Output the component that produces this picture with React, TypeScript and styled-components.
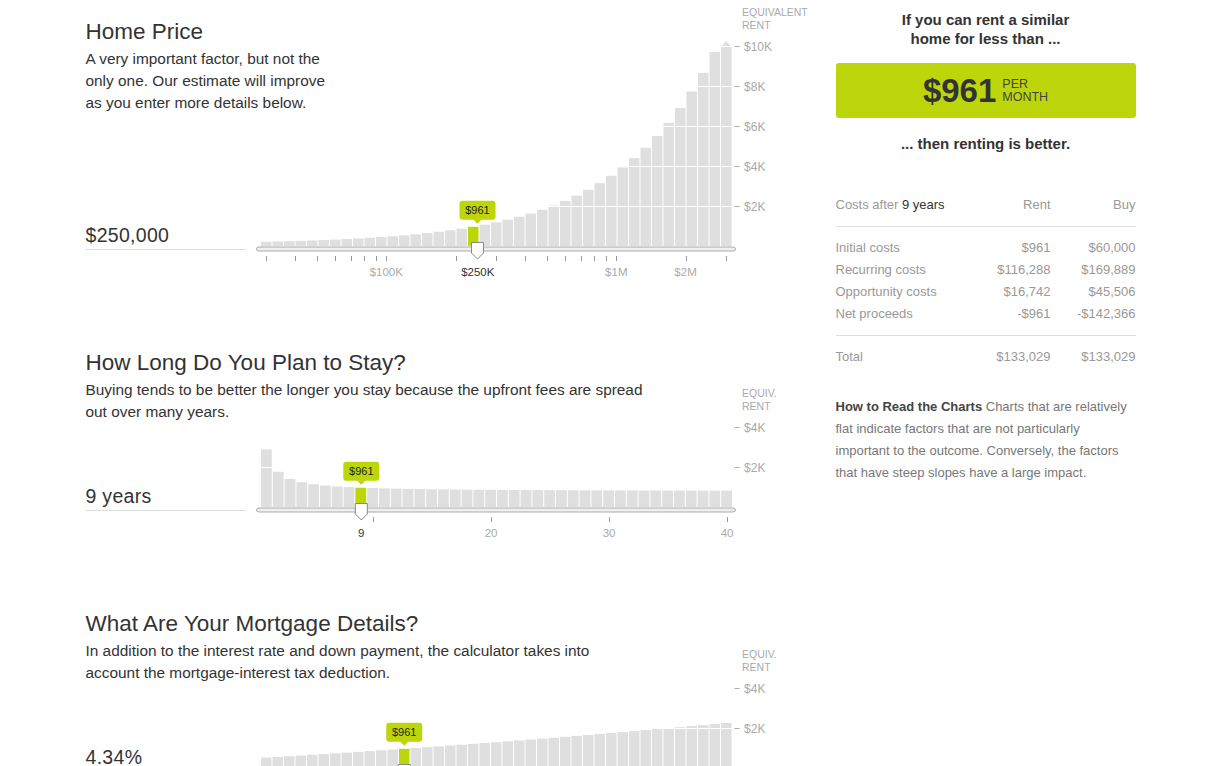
import React from "react";
import styled, { createGlobalStyle } from "styled-components";

const GREEN = "#bdd60b";
const FONT = `"Liberation Sans", Arial, sans-serif`;

const Global = createGlobalStyle`
  html, body { margin: 0; padding: 0; background: #fff; }
  body { font-family: ${FONT}; color: #333; }
  * { box-sizing: border-box; }
`;

const Page = styled.div`
  width: 1051px;
  margin: 0 auto;
  padding-left: 1px;
  display: flex;
  align-items: flex-start;
`;

const Main = styled.main`
  width: 750px;
  flex: none;
`;

const Sidebar = styled.aside`
  width: 300px;
  flex: none;
  padding-top: 10px;
`;

/* ---------- sections ---------- */

const Section = styled.section`
  display: grid;
  grid-template-columns: 170px 560px;
  margin-bottom: 49px;
`;

const Intro = styled.div<{ $w: number }>`
  grid-row: 1;
  grid-column: 1 / 3;
  align-self: start;
  max-width: ${(p) => p.$w}px;
  padding-top: 18px;
  z-index: 1;
`;

const Heading = styled.h2`
  margin: 0;
  font-size: 22.5px;
  line-height: 28px;
  font-weight: 400;
  color: #333;
`;

const Desc = styled.p`
  margin: 2px 0 0;
  font-size: 15.4px;
  line-height: 22px;
  color: #333;
`;

const ChartWrap = styled.div<{ $top: number }>`
  grid-row: 1;
  grid-column: 2;
  margin-top: ${(p) => p.$top}px;
`;

const Value = styled.div`
  grid-row: 1;
  grid-column: 1;
  align-self: end;
  width: 160px;
  margin-bottom: 32px;
  padding-bottom: 3px;
  border-bottom: 1px solid #ddd;
  font-size: 19.5px;
  line-height: 22px;
  letter-spacing: 0.3px;
  color: #333;
`;

/* ---------- chart ---------- */

const ChartSvg = styled.svg`
  display: block;
  overflow: visible;
  font-family: ${FONT};
`;

type Tick = { x: number; label?: string; dark?: boolean; line?: boolean };

type ChartProps = {
  title: [string, string];
  maxK: number;
  bars: number[];
  step: number;
  selected: number;
  handleX: number;
  ticks: Tick[];
};

function BarChart({ title, maxK, bars, step, selected, handleX, ticks }: ChartProps) {
  const base = 46 + maxK * 20;
  const height = base + 36;
  const y = (k: number) => base - 20 * k;
  const levels: number[] = [];
  for (let k = 2; k <= maxK; k += 2) levels.push(k);
  const selTop = y(Math.min(bars[selected], maxK));
  const hx = handleX;
  return (
    <ChartSvg width={560} height={height} viewBox={`0 0 560 ${height}`}>
      <text x={486} y={16} fontSize={10.5} fill="#aaa">
        {title[0]}
      </text>
      <text x={486} y={29} fontSize={10.5} fill="#aaa">
        {title[1]}
      </text>

      {bars.map((v, i) => {
        const top = y(Math.min(v, maxK));
        const x = 5 + step * i;
        const cx = x + (step - 1) / 2;
        return (
          <g key={i}>
            <rect
              x={x}
              y={top}
              width={step - 1}
              height={base - top}
              fill={i === selected ? GREEN : "#dfdfdf"}
            />
            {v > maxK && (
              <polygon
                points={`${cx - 4.5},${top} ${cx + 4.5},${top} ${cx},${top - 5}`}
                fill="#dfdfdf"
              />
            )}
          </g>
        );
      })}

      {levels.map((k) => (
        <g key={k}>
          <line x1={0} x2={478} y1={y(k) + 0.5} y2={y(k) + 0.5} stroke="#fff" />
          <line x1={478.5} x2={483.5} y1={y(k) + 0.5} y2={y(k) + 0.5} stroke="#aaa" />
          <text x={488} y={y(k) + 4.5} fontSize={12} fill="#aaa">
            ${k}K
          </text>
        </g>
      ))}

      <rect
        x={0.5}
        y={base + 1}
        width={479}
        height={4}
        rx={2.5}
        fill="#efefef"
        stroke="#aaa"
      />

      {ticks.map((t, i) => (
        <g key={i}>
          {t.line !== false && (
            <line
              x1={Math.round(t.x) + 0.5}
              x2={Math.round(t.x) + 0.5}
              y1={base + 10}
              y2={base + 15}
              stroke="#999"
            />
          )}
          {t.label && (
            <text
              x={t.x}
              y={base + 30}
              fontSize={11.5}
              textAnchor="middle"
              fill={t.dark ? "#333" : "#aaa"}
            >
              {t.label}
            </text>
          )}
        </g>
      ))}

      <rect x={hx - 18} y={selTop - 26} width={36} height={19} rx={3} fill={GREEN} />
      <polygon
        points={`${hx - 4.5},${selTop - 7.5} ${hx + 4.5},${selTop - 7.5} ${hx},${selTop - 3}`}
        fill={GREEN}
      />
      <text x={hx} y={selTop - 12.5} fontSize={11} textAnchor="middle" fill="#222">
        $961
      </text>

      <path
        d={`M${hx - 6},${base - 3.5} H${hx + 6} V${base + 7} L${hx},${base + 13} L${hx - 6},${base + 7} Z`}
        fill="#fff"
        stroke="#888"
      />
    </ChartSvg>
  );
}

/* ---------- data ---------- */

const priceX = (p: number) => 386.3 + 230 * Math.log10(p / 1e5) - 256;

const priceBars = Array.from({ length: 41 }, (_, i) =>
  i === 18 ? 0.961 : 0.106 + 0.855 * Math.pow(10, 0.05 * (i - 18))
);

const priceTicks: Tick[] = [
  30e3, 40e3, 50e3, 60e3, 70e3, 80e3, 90e3, 1e5, 2e5, 3e5, 4e5, 5e5, 6e5, 7e5, 8e5, 9e5, 1e6, 2e6, 3e6,
].map((p) => ({
  x: priceX(p),
  label: p === 1e5 ? "$100K" : p === 1e6 ? "$1M" : p === 2e6 ? "$2M" : undefined,
}));
priceTicks.push({ x: priceX(2.5e5), label: "$250K", dark: true, line: false });

const yearX = (yr: number) => 5 + 11.8 * (yr - 1) + 5.9;
const yearBars = Array.from({ length: 40 }, (_, i) =>
  i === 8 ? 0.961 : 0.78 + 2.1 / Math.pow(i + 1, 1.1)
);
const yearTicks: Tick[] = [
  { x: yearX(9), label: "9", dark: true, line: false },
  { x: yearX(10) },
  { x: yearX(20), label: "20" },
  { x: yearX(30), label: "30" },
  { x: yearX(40), label: "40" },
];

const rateBars = Array.from({ length: 41 }, (_, i) =>
  i === 12 ? 0.961 : 0.52 + 0.03396 * i + 0.000232 * i * i
);
const rateX = (i: number) => 5 + 11.5 * i + 5.25;
const rateTicks: Tick[] = [0, 10, 20, 30, 40].map((i) => ({ x: rateX(i) }));

/* ---------- sidebar ---------- */

const Lead = styled.div`
  font-size: 15px;
  line-height: 19px;
  font-weight: 700;
  color: #333;
  text-align: center;
`;

const RentBox = styled.div`
  margin: 15px 0 16px;
  height: 55px;
  background: ${GREEN};
  border-radius: 3px;
  display: flex;
  align-items: center;
  justify-content: center;
  gap: 6px;
`;

const BigNum = styled.span`
  font-size: 33px;
  line-height: 36px;
  font-weight: 700;
  color: #333;
`;

const PerMonth = styled.span`
  display: flex;
  flex-direction: column;
  font-size: 12.5px;
  line-height: 13px;
  text-transform: uppercase;
  color: #444;
  margin-top: 1px;
`;

const CostTable = styled.div`
  margin-top: 41px;
  font-size: 13px;
  color: #999;
`;

const Row = styled.div`
  display: grid;
  grid-template-columns: 1fr 100px 85px;
  line-height: 22px;
`;

const HeadRow = styled(Row)`
  margin-bottom: 10px;
`;

const Group = styled.div`
  border-top: 1px solid #ddd;
  padding: 10px 0;
`;

const Cell = styled.span<{ $num?: boolean }>`
  text-align: ${(p) => (p.$num ? "right" : "left")};
`;

const Em = styled.span`
  color: #333;
`;

const HowTo = styled.p`
  margin: 18px 0 0;
  font-size: 13px;
  line-height: 22px;
  color: #777;
  strong {
    color: #444;
    font-weight: 700;
  }
`;

const rows: [string, string, string][] = [
  ["Initial costs", "$961", "$60,000"],
  ["Recurring costs", "$116,288", "$169,889"],
  ["Opportunity costs", "$16,742", "$45,506"],
  ["Net proceeds", "-$961", "-$142,366"],
];

export default function App() {
  return (
    <>
      <Global />
      <Page>
        <Main>
          <Section>
            <Intro $w={250}>
              <Heading>Home Price</Heading>
              <Desc>
                A very important factor, but not the only one. Our estimate will improve as you enter
                more details below.
              </Desc>
            </Intro>
            <ChartWrap $top={0}>
              <BarChart
                title={["EQUIVALENT", "RENT"]}
                maxK={10}
                bars={priceBars}
                step={11.5}
                selected={18}
                handleX={221.5}
                ticks={priceTicks}
              />
            </ChartWrap>
            <Value>$250,000</Value>
          </Section>

          <Section>
            <Intro $w={562}>
              <Heading>How Long Do You Plan to Stay?</Heading>
              <Desc>
                Buying tends to be better the longer you stay because the upfront fees are spread out
                over many years.
              </Desc>
            </Intro>
            <ChartWrap $top={50}>
              <BarChart
                title={["EQUIV.", "RENT"]}
                maxK={4}
                bars={yearBars}
                step={11.8}
                selected={8}
                handleX={yearX(9)}
                ticks={yearTicks}
              />
            </ChartWrap>
            <Value>9 years</Value>
          </Section>

          <Section>
            <Intro $w={562}>
              <Heading>What Are Your Mortgage Details?</Heading>
              <Desc>
                In addition to the interest rate and down payment, the calculator takes into account the
                mortgage-interest tax deduction.
              </Desc>
            </Intro>
            <ChartWrap $top={50}>
              <BarChart
                title={["EQUIV.", "RENT"]}
                maxK={4}
                bars={rateBars}
                step={11.5}
                selected={12}
                handleX={rateX(12)}
                ticks={rateTicks}
              />
            </ChartWrap>
            <Value>4.34%</Value>
          </Section>
        </Main>

        <Sidebar>
          <Lead>
            If you can rent a similar
            <br />
            home for less than ...
          </Lead>
          <RentBox>
            <BigNum>$961</BigNum>
            <PerMonth>
              <span>Per</span>
              <span>Month</span>
            </PerMonth>
          </RentBox>
          <Lead>... then renting is better.</Lead>

          <CostTable>
            <HeadRow>
              <Cell>
                Costs after <Em>9 years</Em>
              </Cell>
              <Cell $num>Rent</Cell>
              <Cell $num>Buy</Cell>
            </HeadRow>
            <Group>
              {rows.map((r) => (
                <Row key={r[0]}>
                  <Cell>{r[0]}</Cell>
                  <Cell $num>{r[1]}</Cell>
                  <Cell $num>{r[2]}</Cell>
                </Row>
              ))}
            </Group>
            <Group>
              <Row>
                <Cell>Total</Cell>
                <Cell $num>$133,029</Cell>
                <Cell $num>$133,029</Cell>
              </Row>
            </Group>
          </CostTable>

          <HowTo>
            <strong>How to Read the Charts</strong> Charts that are relatively flat indicate factors that
            are not particularly important to the outcome. Conversely, the factors that have steep slopes
            have a large impact.
          </HowTo>
        </Sidebar>
      </Page>
    </>
  );
}
